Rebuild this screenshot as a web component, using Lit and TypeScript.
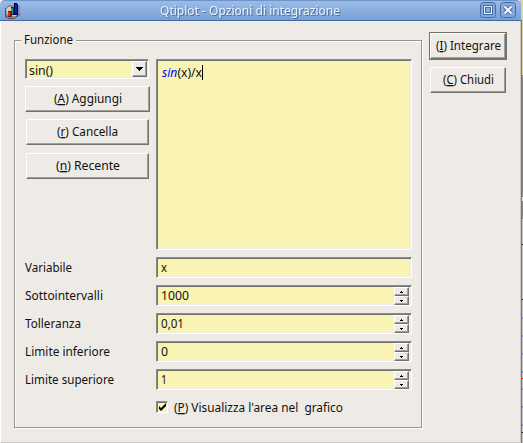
import { LitElement, html, svg, css } from "lit";
import { customElement } from "lit/decorators.js";

type Part = string | { u?: string; em?: string };

/** One line of text set to a fixed advance width. */
const line = (width: number, ...parts: Part[]) => html`<svg class="line" width=${width} height="20">
  <text x="0" y="15" textLength=${width} lengthAdjust="spacingAndGlyphs">${parts.map((p) =>
    typeof p === "string" ? p : p.u ? svg`<tspan class="u">${p.u}</tspan>` : svg`<tspan class="em">${p.em}</tspan>`)}</text>
</svg>`;

@customElement("app-root")
export class AppRoot extends LitElement {
  static styles = css`
    * { box-sizing: border-box; }
    :host { display: flex; width: 523px; height: 443px; overflow: hidden; background: #b8b8b8;
      font: 13px "Noto Sans", "Open Sans", sans-serif; color: #111; }
    .line { display: block; flex: none; overflow: visible; white-space: pre; }
    .line text { fill: currentColor; white-space: pre; }
    .u { text-decoration: underline; text-decoration-thickness: 1px; text-underline-offset: 2px; }
    .em { font-style: italic; fill: #00f; }
    .window { width: 521px; height: 443px; display: flex; flex-direction: column; background: #eeebe7;
      border: solid #cac9c7; border-width: 0 1px 1px 0; border-left: 1px solid #fff; }
    .title { height: 21px; flex: none; display: flex; align-items: flex-start; padding: 1px 5px 0 3px;
      margin: 0 -1px; border-radius: 5px 5px 0 0; border-bottom: 1px solid #41699f;
      border-top: 1px solid #6d93c7; background: linear-gradient(#9bbce7, #79a0d3); color: #eaf2fc; }
    .name { flex: 1; display: flex; padding-left: 140px; filter: drop-shadow(1px 1px 0 #4b70a5); margin-top: -2px; }
    .tb { margin-left: 4px; display: block; }
    .body { flex: 1; display: flex; align-items: flex-start; padding: 11px 0 0 13px; }
    .group { position: relative; width: 408px; height: 388px; margin-top: 8px; border: 1px solid #979591;
      box-shadow: 1px 1px 0 #fff, inset 1px 1px 0 #fff; padding: 18px 9px 0 10px; }
    .legend { position: absolute; left: 6px; top: -12px; padding: 0 3px; background: #eeebe7; }
    .top { display: flex; gap: 6px; }
    .left { width: 125px; flex: none; }
    .sunk { background: #f9f4b4; border: 1px solid; border-color: #8d8b87 #fff #fff #8d8b87;
      box-shadow: inset 1px 1px 0 #74726e, inset -1px -1px 0 #eeebe7; }
    .combo { width: 124px; height: 20px; display: flex; padding: 1px 1px 1px 3px; justify-content: space-between; }
    .combo .line { margin-top: -1px; }
    .raised { background: #eeebe7; border: 1px solid; border-color: #fff #74726e #74726e #fff;
      box-shadow: inset -1px -1px 0 #a09e99; }
    .drop { width: 15px; height: 16px; }
    .drop svg, .spin svg { display: block; }
    .btn { height: 26px; display: flex; justify-content: center; align-items: center; width: 125px; }
    .btn .line { margin-top: -2px; }
    .add { margin-top: 7px; }
    .cancel { margin: 7px 0 0 1px; width: 123px; }
    .recent { margin: 8px 0 0 1px; width: 123px; }
    .edit { width: 256px; height: 191px; padding: 2px 0 0 5px; display: flex; flex: none; }
    .caret { width: 1px; height: 15px; background: #000; margin-top: 3px; }
    .rows { margin-top: 7px; display: grid; row-gap: 7px; }
    .row { display: flex; height: 21px; }
    .label { width: 131px; flex: none; }
    .field { width: 256px; height: 21px; padding: 0 2px 0 4px; display: flex; flex: none; justify-content: space-between; }
    .field .line { margin-top: -1px; }
    .spin { margin: 1px 0 0; width: 15px; height: 18px; }
    .key { height: 9px; display: flex; justify-content: center; padding-top: 3px; }
    .check { display: flex; align-items: center; margin: 7px 0 0 131px; height: 20px; gap: 6px; }
    .box { width: 12px; height: 12px; }
    .box svg { display: block; }
    .side { margin-left: 7px; display: flex; flex-direction: column; align-items: flex-start; }
    .default { border: 1px solid #74726e; }
    .default .btn { width: 76px; }
    .close { width: 76px; margin: 7px 0 0 1px; }
    .behind { width: 2px; height: 443px; display: block; }
  `;

  private spin() {
    return html`<div class="spin">
      <div class="key raised"><svg width="5" height="3"><path d="M2 0h1v1h1v1H1V1h1z" fill="#000"/></svg></div>
      <div class="key raised"><svg width="5" height="3"><path d="M1 0h3v1H3v1H2V1H1z" fill="#000"/></svg></div>
    </div>`;
  }

  private row(label: string, lw: number, value: string, vw: number, spin = true) {
    return html`<div class="row"><div class="label">${line(lw, label)}</div>
      <div class="field sunk">${line(vw, value)}${spin ? this.spin() : ""}</div></div>`;
  }

  render() {
    return html`
      <div class="window">
        <div class="title">
          <svg width="17" height="17" viewBox="0 0 17 17" shape-rendering="crispEdges">
            <path d="M2 6l4-3h9l2 2v7l-4 4H5l-3-2z" fill="#8f8f92"/><path d="M3 7l3-2h9v7l-3 2H5z" fill="#ccc"/>
            <path d="M2 6v8l3 2h7l5-4V5" fill="none" stroke="#555"/>
            <path d="M11 1h3v1h1v11h-4z" fill="#00006b"/><path d="M12 2h2v10h-2z" fill="#1020a8"/>
            <path d="M8 5h3v8H8z" fill="#073c13"/><path d="M8 6h2v6H8z" fill="#18a83a"/>
            <path d="M5 9h4v6H5z" fill="#801018"/><path d="M5 10h2v4H5z" fill="#df2830"/>
          </svg>
          <div class="name">${line(180, "Qtiplot - Opzioni di integrazione")}</div>
          <svg class="tb" width="16" height="16"><rect x=".5" y=".5" width="15" height="15" rx="3" fill="#86aadb" stroke="#416ba5"/>
            <rect x="4.5" y="4.5" width="7" height="7" fill="none" stroke="#416ba5" stroke-width="3"/>
            <rect x="4.5" y="4.5" width="7" height="7" fill="none" stroke="#eaf2fc"/></svg>
          <svg class="tb" width="16" height="16"><rect x=".5" y=".5" width="15" height="15" rx="3" fill="#86aadb" stroke="#416ba5"/>
            <path d="M4.5 4.5l7 7m0-7l-7 7" stroke="#416ba5" stroke-width="4"/><path d="M4.5 4.5l7 7m0-7l-7 7" stroke="#f2f7fd" stroke-width="2.2"/></svg>
        </div>
        <div class="body">
          <div class="group">
            <div class="legend">${line(49, "Funzione")}</div>
            <div class="top">
              <div class="left">
                <div class="combo sunk">${line(24, "sin()")}
                  <div class="drop raised"><svg width="13" height="14"><path d="M3 5h7v1H9v1H8v1H7v1H6V8H5V7H4V6H3z" fill="#000"/></svg></div></div>
                <div class="btn raised add">${line(68, "(", { u: "A" }, ") Aggiungi")}</div>
                <div class="btn raised cancel">${line(61, "(", { u: "r" }, ") Cancella")}</div>
                <div class="btn raised recent">${line(64, "(", { u: "n" }, ") Recente")}</div>
              </div>
              <div class="edit sunk">${line(40, { em: "sin" }, "(x)/x")}<div class="caret"></div></div>
            </div>
            <div class="rows">
              ${this.row("Variabile", 47, "x", 6, false)}
              ${this.row("Sottointervalli", 78, "1000", 28)}
              ${this.row("Tolleranza", 56, "0,01", 23)}
              ${this.row("Limite inferiore", 85, "0", 7)}
              ${this.row("Limite superiore", 89, "1", 6)}
            </div>
            <div class="check"><div class="box sunk"><svg width="10" height="10"><path d="M2 4v3l2 2 5-5V1L4 6z" fill="#000"/></svg></div>
              ${line(169, "(", { u: "P" }, ") Visualizza l'area nel\u00a0 grafico")}</div>
          </div>
          <div class="side">
            <div class="default"><div class="btn raised">${line(65, "(", { u: "I" }, ") Integrare")}</div></div>
            <div class="btn raised close">${line(51, "(", { u: "C" }, ") Chiudi")}</div>
          </div>
        </div>
      </div>
      <svg class="behind" shape-rendering="crispEdges"><rect width="2" height="443" fill="#c4c3c1"/>
        <rect width="2" height="75" fill="#dcd89c"/><rect y="75" width="2" height="144" fill="#858482"/>
        <rect x="1" y="197" width="1" height="4" fill="#ddd"/>
        <rect y="20" width="1" height="423" fill="#777"/>
        ${[244, 299, 432].map((y) => svg`<rect x="1" y=${y} width="1" height="1" fill="#000"/>`)}
        ${[317, 335, 353, 371, 388, 406, 424].map((y) => svg`<rect x="1" y=${y} width="1" height="2" fill="#8c8cb8"/>`)}
        <rect x="1" y="378" width="1" height="1" fill="#e00"/></svg>`;
  }
}
